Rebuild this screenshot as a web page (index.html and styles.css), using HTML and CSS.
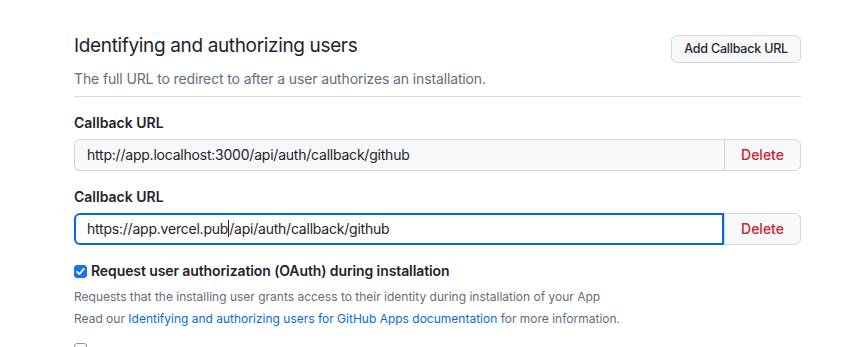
FILE: index.html
```html
<!DOCTYPE html>
<html lang="en">
<head>
<meta charset="utf-8">
<title>Identifying and authorizing users</title>
<link rel="stylesheet" href="styles.css">
</head>
<body>
<main class="page">
  <div class="subhead">
    <div class="subhead-top">
      <h2 class="subhead-heading">Identifying and authorizing users</h2>
      <button class="btn" type="button">Add Callback URL</button>
    </div>
    <p class="subhead-desc">The full URL to redirect to after a user authorizes an installation.</p>
  </div>

  <div class="form-group">
    <label class="form-label">Callback URL</label>
    <div class="input-group">
      <div class="input input-muted">http://app.localhost:3000/api/auth/callback/github</div>
      <button class="btn btn-danger" type="button">Delete</button>
    </div>
  </div>

  <div class="form-group">
    <label class="form-label">Callback URL</label>
    <div class="input-group">
      <div class="input input-focus">https://app.vercel.pub<span class="caret"></span>/api/auth/callback/github</div>
      <button class="btn btn-danger" type="button">Delete</button>
    </div>
  </div>

  <div class="check-group">
    <label class="check-label"><span class="checkbox checked"><svg viewBox="0 0 12 12" width="11" height="11"><path d="M2.3 6.3 L4.8 8.8 L9.6 3.2" fill="none" stroke="#fff" stroke-width="1.9" stroke-linecap="round" stroke-linejoin="round"/></svg></span>Request user authorization (OAuth) during installation</label>
    <p class="note">Requests that the installing user grants access to their identity during installation of your App</p>
    <p class="note">Read our <a href="#">Identifying and authorizing users for GitHub Apps documentation</a> for more information.</p>
  </div>

  <div class="check-group check-group-last">
    <label class="check-label"><span class="checkbox"></span></label>
  </div>
</main>
</body>
</html>
```

FILE: styles.css
```css
html, body {
  margin: 0;
  padding: 0;
  background: #ffffff;
}

body {
  font-family: Inter, "Liberation Sans", Arial, sans-serif;
  color: #1f2328;
  overflow: hidden;
  height: 347px;
}

.page {
  width: 727px;
  margin-left: 74px;
  padding-top: 31px;
}

.subhead {
  border-bottom: 1px solid #d8dee4;
  padding-bottom: 7px;
  margin-bottom: 16px;
}

.subhead-top {
  display: flex;
  justify-content: space-between;
  align-items: flex-start;
}

.subhead-heading {
  margin: 0;
  font-size: 19px;
  line-height: 30px;
  font-weight: 400;
  letter-spacing: -0.35px;
}

.subhead-desc {
  margin: 5px 0 0;
  font-size: 14px;
  line-height: 21px;
  color: #656d76;
  letter-spacing: -0.13px;
}

.btn {
  font-family: inherit;
  font-size: 12.5px;
  font-weight: 500;
  letter-spacing: -0.2px;
  line-height: 20px;
  height: 28px;
  padding: 3px 12px;
  margin-top: 4px;
  color: #24292f;
  background: #f6f8fa;
  border: 1px solid #d0d7de;
  border-radius: 6px;
  box-sizing: border-box;
}

.form-group {
  margin-bottom: 16px;
}

.form-label {
  display: block;
  font-size: 14px;
  font-weight: 600;
  line-height: 20px;
  margin-bottom: 6px;
}

.input-group {
  display: flex;
  height: 32px;
}

.input {
  flex: 1;
  box-sizing: border-box;
  height: 32px;
  font-size: 14px;
  letter-spacing: -0.22px;
  line-height: 20px;
  padding: 5px 12px;
  border: 1px solid #d0d7de;
  border-right: none;
  border-radius: 6px 0 0 6px;
  white-space: nowrap;
}

.input-muted {
  background: #f6f8fa;
}

.input-focus {
  background: #ffffff;
  border: 2px solid #0969da;
  padding: 4px 11px;
}

.caret {
  display: inline-block;
  width: 1px;
  height: 17px;
  background: #1f2328;
  vertical-align: -3px;
}

.btn-danger {
  margin: 0;
  height: 32px;
  width: 77px;
  font-size: 14px;
  letter-spacing: 0;
  padding: 5px 12px;
  color: #cf222e;
  border-radius: 0 6px 6px 0;
}

.check-group {
  margin-top: 14px;
}

.check-group-last {
  margin-top: 16px;
}

.check-label {
  display: flex;
  align-items: center;
  font-size: 14px;
  font-weight: 600;
  letter-spacing: -0.1px;
  line-height: 20px;
}

.checkbox {
  display: inline-flex;
  align-items: center;
  justify-content: center;
  width: 13px;
  height: 13px;
  box-sizing: border-box;
  border-radius: 3px;
  margin-right: 4px;
  border: 1px solid #8c959f;
  background: #fff;
}

.checkbox.checked {
  background: #1a73e8;
  border-color: #1a73e8;
}

.note {
  margin: 8px 0 0;
  font-size: 12px;
  line-height: 16px;
  color: #656d76;
}

.note + .note {
  margin-top: 6px;
}

.note a {
  color: #0969da;
  text-decoration: none;
}
```
